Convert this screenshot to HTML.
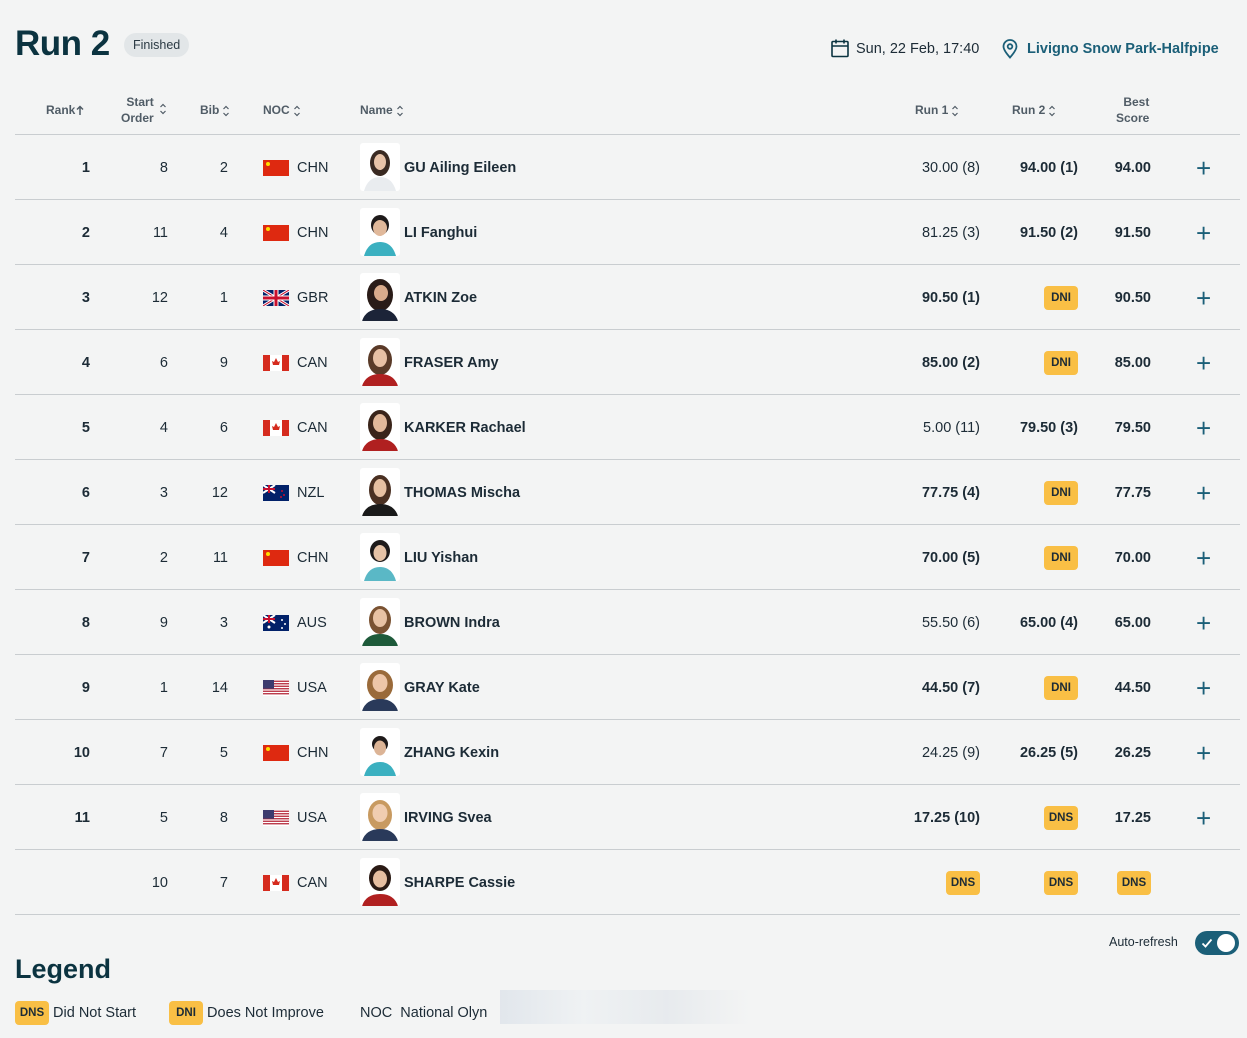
<!DOCTYPE html>
<html><head><meta charset="utf-8"><style>
*{box-sizing:border-box;margin:0;padding:0}
body{width:1247px;height:1038px;background:#f3f4f4;font-family:"Liberation Sans",sans-serif;color:#1c2b36;position:relative;overflow:hidden}
.a{position:absolute}
h1{position:absolute;left:15px;top:24px;font-size:35px;font-weight:bold;color:#0b3340;letter-spacing:-0.5px}
.pill{position:absolute;left:124px;top:33px;height:24px;padding:0 9px;border-radius:12px;background:#e2e6e8;font-size:12.5px;line-height:24px;color:#2b3a44}
.hd{position:absolute;font-size:12px;color:#505c66;font-weight:bold;line-height:16px}
.so2{display:inline-block;vertical-align:middle;margin-left:3px}
.line{position:absolute;left:15px;width:1225px;height:1px;background:#c9cdd0}
.row{position:absolute;left:0;width:1247px;height:65px}
.row>*{position:absolute;top:1px;line-height:65px;font-size:14.5px}
.rk{left:50px;width:40px;text-align:right;font-weight:bold}
.so{left:128px;width:40px;text-align:right}
.bib{left:188px;width:40px;text-align:right}
.fl{top:25px!important;left:263px;width:26px;height:16px;line-height:0}
.noc{left:297px}
.ph{top:8px!important;left:360px;width:40px;height:48px;background:#fff;border-radius:3px;overflow:hidden;line-height:0}
.nm{left:404px;font-weight:bold}
.r1{left:880px;width:100px;text-align:right}
.r2{left:978px;width:100px;text-align:right}
.bs{left:1071px;width:80px;text-align:right;font-weight:bold}
.b{font-weight:bold}
.pl{left:1196px;font-size:26px!important;color:#1b5f78;font-weight:normal}
.bdg{display:inline-block;width:34px;height:24px;line-height:24px;border-radius:4px;background:#f9bf45;font-size:11.5px;font-weight:bold;text-align:center;vertical-align:middle;color:#1c2b36}
</style></head><body>
<h1>Run 2</h1><div class="pill">Finished</div>
<svg class="a" style="left:830px;top:38px" width="20" height="20" viewBox="0 0 20 20" fill="none" stroke="#0b3340" stroke-width="1.6"><rect x="2" y="3.5" width="16" height="15" rx="1"/><path d="M2 8h16M6 1.5v4M14 1.5v4"/></svg>
<div class="a" style="left:856px;top:41px;font-size:14.5px;color:#1c2b36">Sun, 22 Feb, 17:40</div>
<svg class="a" style="left:1001px;top:39px" width="18" height="20" viewBox="0 0 18 20" fill="none" stroke="#1b5f78" stroke-width="1.8"><path d="M9 18.5C5 14 2.5 10.5 2.5 7.5a6.5 6.5 0 0 1 13 0c0 3-2.5 6.5-6.5 11z"/><circle cx="9" cy="7.5" r="2.3"/></svg>
<div class="a" style="left:1027px;top:41px;font-size:14.5px;font-weight:bold;color:#1b5f78">Livigno Snow Park-Halfpipe</div>

<div class="hd" style="left:46px;top:102px">Rank<svg class="so2" style="margin-left:1px" width="8" height="11" viewBox="0 0 8 11" fill="none" stroke="#505c66" stroke-width="1.5"><path d="M4 10V1.5M1 4.5l3-3 3 3"/></svg></div>
<div class="hd" style="left:121px;top:94px;text-align:right">Start<br>Order</div><svg class="a" style="left:159px;top:102px" width="8" height="14" viewBox="0 0 8 14" fill="none" stroke="#505c66" stroke-width="1.2"><path d="M1.5 5L4 2.5 6.5 5M1.5 9L4 11.5 6.5 9"/></svg>
<div class="hd" style="left:200px;top:102px">Bib<svg class="so2" width="8" height="14" viewBox="0 0 8 14" fill="none" stroke="#505c66" stroke-width="1.2"><path d="M1.5 5L4 2.5 6.5 5M1.5 9L4 11.5 6.5 9"/></svg></div>
<div class="hd" style="left:263px;top:102px">NOC<svg class="so2" width="8" height="14" viewBox="0 0 8 14" fill="none" stroke="#505c66" stroke-width="1.2"><path d="M1.5 5L4 2.5 6.5 5M1.5 9L4 11.5 6.5 9"/></svg></div>
<div class="hd" style="left:360px;top:102px">Name<svg class="so2" width="8" height="14" viewBox="0 0 8 14" fill="none" stroke="#505c66" stroke-width="1.2"><path d="M1.5 5L4 2.5 6.5 5M1.5 9L4 11.5 6.5 9"/></svg></div>
<div class="hd" style="left:915px;top:102px">Run 1<svg class="so2" width="8" height="14" viewBox="0 0 8 14" fill="none" stroke="#505c66" stroke-width="1.2"><path d="M1.5 5L4 2.5 6.5 5M1.5 9L4 11.5 6.5 9"/></svg></div>
<div class="hd" style="left:1012px;top:102px">Run 2<svg class="so2" width="8" height="14" viewBox="0 0 8 14" fill="none" stroke="#505c66" stroke-width="1.2"><path d="M1.5 5L4 2.5 6.5 5M1.5 9L4 11.5 6.5 9"/></svg></div>
<div class="hd" style="left:1116px;top:94px;text-align:right">Best<br>Score</div>
<div class="line" style="top:134px"></div>

<div class="row" style="top:135px"><div class="rk">1</div><div class="so">8</div><div class="bib">2</div><div class="fl"><svg width="26" height="16"><rect width="26" height="16" fill="#de2910"/><circle cx="5" cy="4" r="2" fill="#ffde00"/></svg></div><div class="noc">CHN</div><div class="ph"><svg width="40" height="48"><ellipse cx="20" cy="20" rx="10" ry="13" fill="#3a2a22"/><ellipse cx="20" cy="19" rx="6" ry="8" fill="#e8c3a8"/><path d="M4 48q4-14 16-14t16 14z" fill="#e9ecef"/></svg></div><div class="nm">GU Ailing Eileen</div><div class="r1">30.00 (8)</div><div class="r2 b">94.00 (1)</div><div class="bs">94.00</div><div class="pl">+</div></div>
<div class="line" style="top:199px"></div>

<div class="row" style="top:200px"><div class="rk">2</div><div class="so">11</div><div class="bib">4</div><div class="fl"><svg width="26" height="16"><rect width="26" height="16" fill="#de2910"/><circle cx="5" cy="4" r="2" fill="#ffde00"/></svg></div><div class="noc">CHN</div><div class="ph"><svg width="40" height="48"><ellipse cx="20" cy="17" rx="9" ry="10" fill="#1e1a1a"/><ellipse cx="20" cy="20" rx="7" ry="8" fill="#e0b89a"/><path d="M4 48q4-14 16-14t16 14z" fill="#3bb0c0"/></svg></div><div class="nm">LI Fanghui</div><div class="r1">81.25 (3)</div><div class="r2 b">91.50 (2)</div><div class="bs">91.50</div><div class="pl">+</div></div>
<div class="line" style="top:264px"></div>

<div class="row" style="top:265px"><div class="rk">3</div><div class="so">12</div><div class="bib">1</div><div class="fl"><svg width="26" height="16"><rect width="26" height="16" fill="#012169"/><path d="M0 0L26 16M26 0L0 16" stroke="#fff" stroke-width="3"/><path d="M0 0L26 16M26 0L0 16" stroke="#c8102e" stroke-width="1"/><path d="M13 0v16M0 8h26" stroke="#fff" stroke-width="5"/><path d="M13 0v16M0 8h26" stroke="#c8102e" stroke-width="3"/></svg></div><div class="noc">GBR</div><div class="ph"><svg width="40" height="48"><ellipse cx="20" cy="22" rx="13" ry="16" fill="#2a1c18"/><ellipse cx="21" cy="20" rx="7" ry="8" fill="#d9ab8c"/><path d="M2 48q4-12 18-12t18 12z" fill="#1c2438"/></svg></div><div class="nm">ATKIN Zoe</div><div class="r1 b">90.50 (1)</div><div class="r2"><span class="bdg">DNI</span></div><div class="bs">90.50</div><div class="pl">+</div></div>
<div class="line" style="top:329px"></div>

<div class="row" style="top:330px"><div class="rk">4</div><div class="so">6</div><div class="bib">9</div><div class="fl"><svg width="26" height="16"><rect width="26" height="16" fill="#fff"/><rect width="7" height="16" fill="#d52b1e"/><rect x="19" width="7" height="16" fill="#d52b1e"/><path d="M13 3l2 4 2-1-1 4h-6l-1-4 2 1z" fill="#d52b1e"/></svg></div><div class="noc">CAN</div><div class="ph"><svg width="40" height="48"><ellipse cx="20" cy="22" rx="12" ry="15" fill="#5a3a28"/><ellipse cx="20" cy="20" rx="7" ry="9" fill="#e8c0a4"/><path d="M2 48q4-12 18-12t18 12z" fill="#b02020"/></svg></div><div class="nm">FRASER Amy</div><div class="r1 b">85.00 (2)</div><div class="r2"><span class="bdg">DNI</span></div><div class="bs">85.00</div><div class="pl">+</div></div>
<div class="line" style="top:394px"></div>

<div class="row" style="top:395px"><div class="rk">5</div><div class="so">4</div><div class="bib">6</div><div class="fl"><svg width="26" height="16"><rect width="26" height="16" fill="#fff"/><rect width="7" height="16" fill="#d52b1e"/><rect x="19" width="7" height="16" fill="#d52b1e"/><path d="M13 3l2 4 2-1-1 4h-6l-1-4 2 1z" fill="#d52b1e"/></svg></div><div class="noc">CAN</div><div class="ph"><svg width="40" height="48"><ellipse cx="20" cy="22" rx="12" ry="15" fill="#3a241a"/><ellipse cx="20" cy="20" rx="7" ry="9" fill="#e2b89a"/><path d="M2 48q4-12 18-12t18 12z" fill="#b02020"/></svg></div><div class="nm">KARKER Rachael</div><div class="r1">5.00 (11)</div><div class="r2 b">79.50 (3)</div><div class="bs">79.50</div><div class="pl">+</div></div>
<div class="line" style="top:459px"></div>

<div class="row" style="top:460px"><div class="rk">6</div><div class="so">3</div><div class="bib">12</div><div class="fl"><svg width="26" height="16"><rect width="26" height="16" fill="#012169"/><path d="M0 0L12 8M12 0L0 8" stroke="#fff" stroke-width="2"/><path d="M6 0v8M0 4h12" stroke="#c8102e" stroke-width="2"/><circle cx="19" cy="6" r="1" fill="#c8102e"/><circle cx="21" cy="10" r="1" fill="#c8102e"/><circle cx="18" cy="12" r="1" fill="#c8102e"/></svg></div><div class="noc">NZL</div><div class="ph"><svg width="40" height="48"><ellipse cx="20" cy="22" rx="11" ry="15" fill="#4a3022"/><ellipse cx="20" cy="20" rx="6.5" ry="9" fill="#e6c0a2"/><path d="M2 48q4-12 18-12t18 12z" fill="#1a1a1a"/></svg></div><div class="nm">THOMAS Mischa</div><div class="r1 b">77.75 (4)</div><div class="r2"><span class="bdg">DNI</span></div><div class="bs">77.75</div><div class="pl">+</div></div>
<div class="line" style="top:524px"></div>

<div class="row" style="top:525px"><div class="rk">7</div><div class="so">2</div><div class="bib">11</div><div class="fl"><svg width="26" height="16"><rect width="26" height="16" fill="#de2910"/><circle cx="5" cy="4" r="2" fill="#ffde00"/></svg></div><div class="noc">CHN</div><div class="ph"><svg width="40" height="48"><ellipse cx="20" cy="18" rx="10" ry="11" fill="#1e1a1a"/><ellipse cx="20" cy="20" rx="6.5" ry="8" fill="#e6c2a6"/><path d="M4 48q4-14 16-14t16 14z" fill="#5ab8c6"/></svg></div><div class="nm">LIU Yishan</div><div class="r1 b">70.00 (5)</div><div class="r2"><span class="bdg">DNI</span></div><div class="bs">70.00</div><div class="pl">+</div></div>
<div class="line" style="top:589px"></div>

<div class="row" style="top:590px"><div class="rk">8</div><div class="so">9</div><div class="bib">3</div><div class="fl"><svg width="26" height="16"><rect width="26" height="16" fill="#012169"/><path d="M0 0L12 8M12 0L0 8" stroke="#fff" stroke-width="2"/><path d="M6 0v8M0 4h12" stroke="#c8102e" stroke-width="2"/><circle cx="19" cy="5" r="1" fill="#fff"/><circle cx="22" cy="9" r="1" fill="#fff"/><circle cx="19" cy="13" r="1" fill="#fff"/><circle cx="6" cy="12" r="1.5" fill="#fff"/></svg></div><div class="noc">AUS</div><div class="ph"><svg width="40" height="48"><ellipse cx="20" cy="22" rx="11" ry="14" fill="#7a5232"/><ellipse cx="20" cy="20" rx="7" ry="9" fill="#e8c2a4"/><path d="M2 48q4-12 18-12t18 12z" fill="#1e5a3a"/></svg></div><div class="nm">BROWN Indra</div><div class="r1">55.50 (6)</div><div class="r2 b">65.00 (4)</div><div class="bs">65.00</div><div class="pl">+</div></div>
<div class="line" style="top:654px"></div>

<div class="row" style="top:655px"><div class="rk">9</div><div class="so">1</div><div class="bib">14</div><div class="fl"><svg width="26" height="16"><rect width="26" height="16" fill="#fff"/><path d="M0 1.2h26M0 3.7h26M0 6.2h26M0 8.7h26M0 11.2h26M0 13.7h26" stroke="#b22234" stroke-width="1.25"/><rect width="11" height="8.7" fill="#3c3b6e"/></svg></div><div class="noc">USA</div><div class="ph"><svg width="40" height="48"><ellipse cx="20" cy="22" rx="13" ry="15" fill="#9a6a3a"/><ellipse cx="20" cy="20" rx="7.5" ry="9" fill="#eec6a8"/><path d="M2 48q4-12 18-12t18 12z" fill="#2a3a5a"/></svg></div><div class="nm">GRAY Kate</div><div class="r1 b">44.50 (7)</div><div class="r2"><span class="bdg">DNI</span></div><div class="bs">44.50</div><div class="pl">+</div></div>
<div class="line" style="top:719px"></div>

<div class="row" style="top:720px"><div class="rk">10</div><div class="so">7</div><div class="bib">5</div><div class="fl"><svg width="26" height="16"><rect width="26" height="16" fill="#de2910"/><circle cx="5" cy="4" r="2" fill="#ffde00"/></svg></div><div class="noc">CHN</div><div class="ph"><svg width="40" height="48"><ellipse cx="20" cy="16" rx="8" ry="8" fill="#1e1a1a"/><ellipse cx="20" cy="20" rx="6" ry="7.5" fill="#dcb496"/><path d="M4 48q4-14 16-14t16 14z" fill="#3bb0c0"/></svg></div><div class="nm">ZHANG Kexin</div><div class="r1">24.25 (9)</div><div class="r2 b">26.25 (5)</div><div class="bs">26.25</div><div class="pl">+</div></div>
<div class="line" style="top:784px"></div>

<div class="row" style="top:785px"><div class="rk">11</div><div class="so">5</div><div class="bib">8</div><div class="fl"><svg width="26" height="16"><rect width="26" height="16" fill="#fff"/><path d="M0 1.2h26M0 3.7h26M0 6.2h26M0 8.7h26M0 11.2h26M0 13.7h26" stroke="#b22234" stroke-width="1.25"/><rect width="11" height="8.7" fill="#3c3b6e"/></svg></div><div class="noc">USA</div><div class="ph"><svg width="40" height="48"><ellipse cx="20" cy="22" rx="12" ry="15" fill="#c89a60"/><ellipse cx="20" cy="20" rx="7.5" ry="9" fill="#f0cdb0"/><path d="M2 48q4-12 18-12t18 12z" fill="#2a3a5a"/></svg></div><div class="nm">IRVING Svea</div><div class="r1 b">17.25 (10)</div><div class="r2"><span class="bdg">DNS</span></div><div class="bs">17.25</div><div class="pl">+</div></div>
<div class="line" style="top:849px"></div>

<div class="row" style="top:850px"><div class="so">10</div><div class="bib">7</div><div class="fl"><svg width="26" height="16"><rect width="26" height="16" fill="#fff"/><rect width="7" height="16" fill="#d52b1e"/><rect x="19" width="7" height="16" fill="#d52b1e"/><path d="M13 3l2 4 2-1-1 4h-6l-1-4 2 1z" fill="#d52b1e"/></svg></div><div class="noc">CAN</div><div class="ph"><svg width="40" height="48"><ellipse cx="20" cy="20" rx="11" ry="13" fill="#2a1a14"/><ellipse cx="20" cy="21" rx="7" ry="8.5" fill="#e6bea0"/><path d="M2 48q4-12 18-12t18 12z" fill="#b02020"/></svg></div><div class="nm">SHARPE Cassie</div><div class="r1"><span class="bdg">DNS</span></div><div class="r2"><span class="bdg">DNS</span></div><div class="bs"><span class="bdg" style="margin-right:0px">DNS</span></div></div>
<div class="line" style="top:914px"></div>

<div class="a" style="left:1109px;top:935px;font-size:12.5px;color:#1c2b36">Auto-refresh</div>
<div class="a" style="left:1195px;top:931px;width:44px;height:24px;border-radius:12px;background:#1b5f78"><svg class="a" style="left:6px;top:6px" width="12" height="12" viewBox="0 0 12 12" fill="none" stroke="#fff" stroke-width="1.8"><path d="M1.5 6.5l3 3 6-7"/></svg><div class="a" style="left:22px;top:3px;width:18px;height:18px;border-radius:9px;background:#fff"></div></div>

<div class="a" style="left:15px;top:954px;font-size:27px;font-weight:bold;color:#0b3340">Legend</div>
<div class="a" style="left:15px;top:1001px;font-size:14.5px;line-height:24px"><span class="bdg">DNS</span> Did Not Start</div>
<div class="a" style="left:169px;top:1001px;font-size:14.5px;line-height:24px"><span class="bdg">DNI</span> Does Not Improve</div>
<div class="a" style="left:360px;top:1001px;font-size:14.5px;line-height:24px">NOC&nbsp; National Olyn</div>
<div class="a" style="left:500px;top:990px;width:250px;height:34px;background:linear-gradient(90deg,#dde3ea,#eef1f3,#e4e8ec,#f3f4f4);opacity:.8"></div>
</body></html>
